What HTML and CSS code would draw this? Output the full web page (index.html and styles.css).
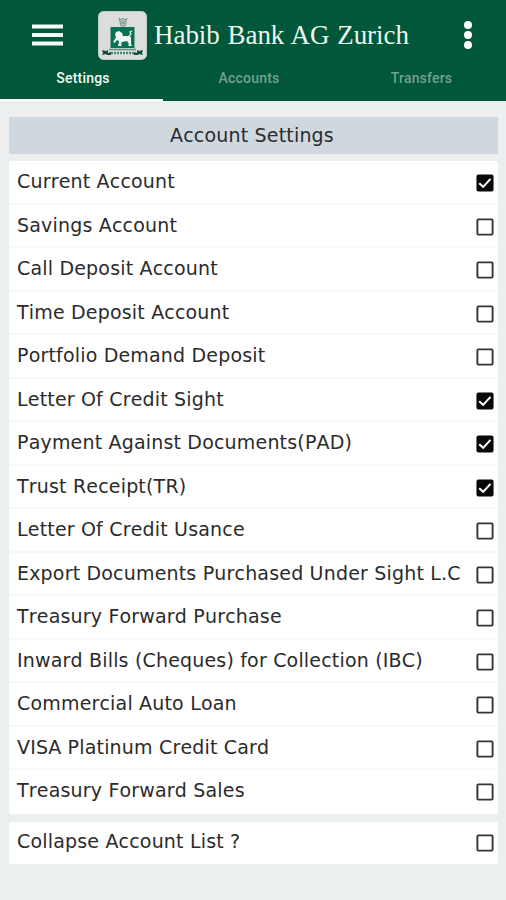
FILE: index.html
```html
<!DOCTYPE html>
<html lang="en">
<head>
<meta charset="utf-8">
<title>Account Settings</title>
<link rel="stylesheet" href="styles.css">
</head>
<body>
<header class="header">
  <div class="bar">
    <svg class="menu" width="31" height="22" viewBox="0 0 31 22"><path d="M0 2.5h31M0 11h31M0 19.5h31" stroke="#f4faf5" stroke-width="4"/></svg>
    <svg class="logo" width="49" height="49" viewBox="0 0 49 49">
      <rect x=".5" y=".5" width="48" height="48" rx="5" fill="#dcdede" stroke="#bfcfc8"/>
      <path d="M21 7l2 2 2-2 2 2 2-2-1 4h-6zM22 12h6l-1 3h-4z" fill="#b5c5be" stroke="#7b988e" stroke-width="1"/>
      <path d="M12.500 16h24v21h-24z" fill="#087255"/>
      <path d="M17 24l1-3 3-1 3 2 1 3h6l2 1v7l1 2h-4l1-2-2-3-5 1-1 3 1 1h-4l1-4-1-2-2 1-1 2-2-1 2-3 1-2z" fill="#eef4ef"/>
      <path d="M31 25l2-2-1-2 2-1" stroke="#eef4ef" stroke-width="1.200" fill="none"/>
      <path d="M4 39l4 1 2-1v3l3-1v3H9l-1-1-4 1 1-2zM45 39l-4 1-2-1v3l-3-1v3h4l1-1 4 1-1-2z" fill="#164c3e"/>
      <path d="M13 42h23" stroke="#4f8674" stroke-width="2.500" stroke-dasharray="2 1"/>
      <path d="M11 38.500h27" stroke="#5b9180" stroke-width="1.500"/>
    </svg>
    <h1 class="brand">Habib Bank AG Zurich</h1>
    <svg class="more" width="8" height="28" viewBox="0 0 8 28" fill="#fff"><circle cx="4" cy="4" r="4"/><circle cx="4" cy="14" r="4"/><circle cx="4" cy="24" r="4"/></svg>
  </div>
  <nav class="tabs"><a class="tab active">Settings</a><a class="tab">Accounts</a><a class="tab">Transfers</a></nav>
</header>
<main class="content">
  <h2 class="title">Account Settings</h2>
  <div class="list" id="accounts"></div>
  <div class="list" id="options"></div>
</main>
<script src="app.js"></script>
</body>
</html>
```
FILE: styles.css
```css
* { box-sizing: border-box; }
body { margin: 0; height: 900px; background: #ebeff0; overflow: hidden; font-family: "DejaVu Sans", sans-serif; color: #2b2b2b; font-kerning: none; }
.header { height: 101px; background: #00573a; }
.bar { height: 65px; display: flex; align-items: flex-start; padding: 11px 34px 0 32px; }
.menu { margin-top: 13px; margin-right: 35px; }
.brand { margin: 6px 0 0 7px; font: 27px/37px "Liberation Serif", serif; letter-spacing: -.04px; word-spacing: 1px; color: #edf6ef; white-space: nowrap; width: 255px; }
.more { margin: 10px 0 0 auto; }
.tabs { display: grid; grid-template-columns: 163px 172px 171px; height: 36px; }
.tab { text-align: center; font: 500 14px/26px Roboto, sans-serif; letter-spacing: .2px; color: #73a18d; height: 36px; }
.tab.active { color: #f2faf4; border-bottom: 2px solid #fff; padding-left: 3px; }
.tab:last-child { padding-left: 2px; }
.content { padding: 16px 8px 0 9px; }
.title { height: 37px; margin: 0 0 7px; background: #cfd8df; text-align: center; font-size: 19px; letter-spacing: .18px; line-height: 37px; font-weight: 400; padding-right: 3px; }
.list { background: #fff; margin-bottom: 8px; border-radius: 2px; }
.row { height: 43.5px; display: flex; justify-content: space-between; align-items: flex-start; padding: 0 4px 0 8px; border-bottom: 2px solid #f7f8f8; font-size: 19px; letter-spacing: .18px; line-height: 41px; white-space: nowrap; }
.row:last-child { border-bottom: 0; }
#options .row { height: 42.5px; line-height: 39px; }
#options .check { margin-top: 12px; }
.check { margin-top: 13px; flex: none; display: block; }
```
FILE: app.js
```javascript
const accounts = [
  ["Current Account", 1], ["Savings Account"], ["Call Deposit Account"], ["Time Deposit Account"],
  ["Portfolio Demand Deposit"], ["Letter Of Credit Sight", 1], ["Payment Against Documents(PAD)", 1],
  ["Trust Receipt(TR)", 1], ["Letter Of Credit Usance"], ["Export Documents Purchased Under Sight L.C"],
  ["Treasury Forward Purchase"], ["Inward Bills (Cheques) for Collection (IBC)"],
  ["Commercial Auto Loan"], ["VISA Platinum Credit Card"], ["Treasury Forward Sales"]
];
const box = on => `<svg class="check" width="18" height="18" viewBox="0 0 18 18"><rect x="1.4" y="1.4" width="15.2" height="15.2" rx="1" fill="${on ? "#080808" : "#fff"}" stroke="${on ? "#080808" : "#333"}" stroke-width="1.9"/>${on ? '<path d="M3.2 9.2l4 3.6 7.3-8" fill="none" stroke="#fff" stroke-width="2"/>' : ""}</svg>`;
const render = (id, rows) => {
  document.getElementById(id).innerHTML = rows.map(([name, on]) =>
    `<div class="row"><span>${name}</span>${box(on)}</div>`).join("");
};
render("accounts", accounts);
render("options", [["Collapse Account List ?"]]);
```
